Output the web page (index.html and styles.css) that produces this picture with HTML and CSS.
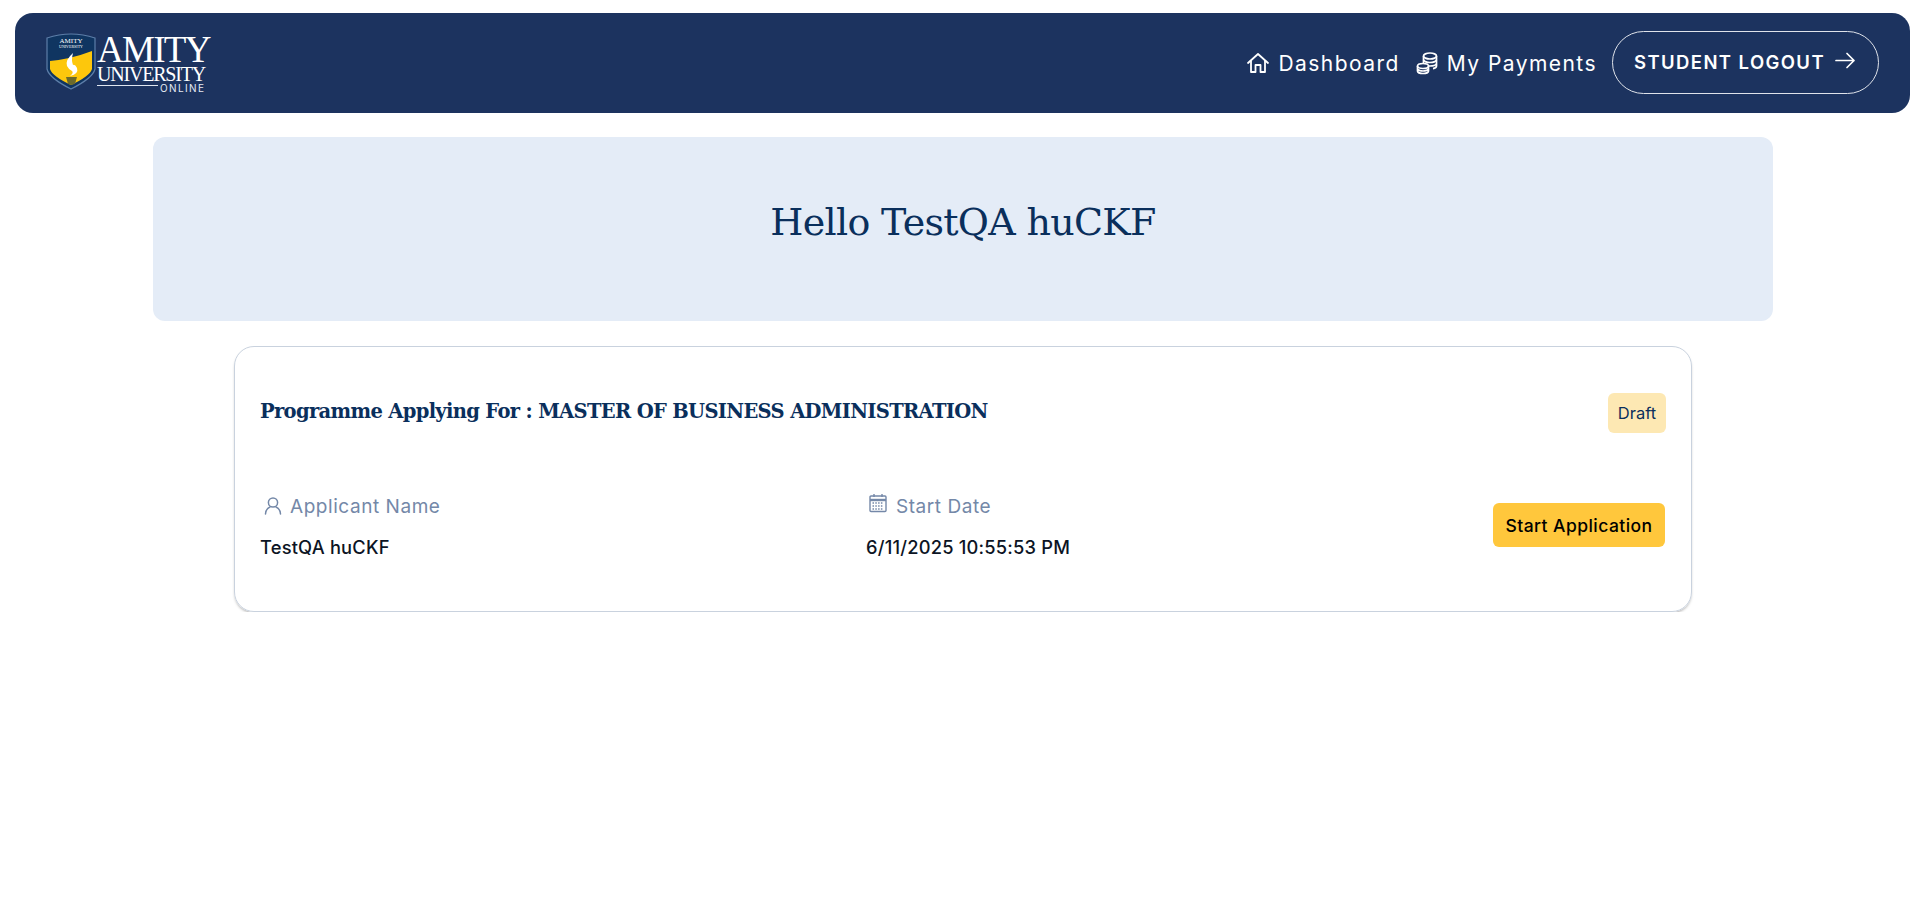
FILE: index.html
```html
<!DOCTYPE html>
<html>

<head>
    <title>Student Dashboard</title>
    <link rel="stylesheet" href="styles.css">
</head>

<body>
    <nav class="navbar">
        <div class="logo">
            <svg class="logo-shield" width="50" height="58" viewBox="0 0 50 58">
                <path d="M1 6 Q25 -2 49 6 L49 37 Q47 46 25 57 Q3 46 1 37 Z" fill="#0f3561" stroke="#5d7ea8" stroke-width="1.2" />
                <path d="M4 29 Q25 27 46 19 L46 37 Q44 44 25 53 Q6 44 4 37 Z" fill="#fdc70c" />
                <path d="M27 21 Q19 28 21 34 Q23 38 26 39 Q28 41 24 44 Q33 42 31 36 Q29 32 27 33 Q25 28 27 21 Z" fill="#fff" />
                <path d="M20 45 H31 L29 52 L25 53 L22 52 Z" fill="#6b6a2c" />
                <text x="25" y="11" class="shield-text">AMITY</text>
                <text x="25" y="16" class="shield-small">UNIVERSITY</text>
            </svg>
            <div class="logo-words">
                <span class="logo-amity">AMITY</span>
                <span class="logo-uni">UNIVERSITY</span>
                <div class="logo-bottom">
                    <span class="logo-line"></span>
                    <span class="logo-online">ONLINE</span>
                </div>
            </div>
        </div>
        <div class="nav-links">
            <a class="nav-link">
                <svg width="24" height="24" viewBox="0 0 24 24" fill="none" stroke="#fff" stroke-width="1.8" stroke-linejoin="round" stroke-linecap="round">
                    <path d="M2 12 L12 3 L22 12" />
                    <path d="M5 10 V21 H9.5 V14 H14.5 V21 H19 V10" />
                </svg>
                Dashboard
            </a>
            <a class="nav-link">
                <svg width="24" height="24" viewBox="0 0 24 24" fill="none" stroke="#fff" stroke-width="1.7">
                    <ellipse cx="15" cy="5" rx="6.5" ry="3" />
                    <path d="M8.5 5 V17 M21.5 5 V15 Q21.5 17 18 17.6" />
                    <path d="M8.5 9 Q10 11.5 15 11.5 T21.5 9 M8.5 13 Q10 15 15 15 T21.5 13" />
                    <ellipse cx="8" cy="15" rx="5.5" ry="2.5" fill="#1c335f" />
                    <path d="M2.5 15 V20 Q3 22.5 8 22.5 T13.5 20 V15 M2.5 18 Q4 20 8 20 T13.5 18" />
                </svg>
                My Payments
            </a>
            <a class="logout-btn">
                STUDENT LOGOUT
                <svg width="24" height="24" viewBox="0 0 24 24" fill="none" stroke="#fff" stroke-width="1.7" stroke-linecap="round" stroke-linejoin="round">
                    <path d="M3 10.5 H21 M14 3.5 L21 10.5 L14 17.5" />
                </svg>
            </a>
        </div>
    </nav>

    <div class="banner">
        <h1>Hello TestQA huCKF</h1>
    </div>

    <div class="card">
        <div class="card-top">
            <h2>Programme Applying For : MASTER OF BUSINESS ADMINISTRATION</h2>
            <span class="badge">Draft</span>
        </div>
        <div class="card-bottom">
            <div class="info info-name">
                <div class="info-label">
                    <svg width="20" height="20" viewBox="0 0 20 20" fill="none" stroke="#7488a8" stroke-width="1.5" stroke-linecap="round">
                        <circle cx="10" cy="6.5" r="4.6" />
                        <path d="M2.5 18 Q3 12.5 7 11 M17.5 18 Q17 12.5 13 11" />
                    </svg>
                    Applicant Name
                </div>
                <div class="info-value">TestQA huCKF</div>
            </div>
            <div class="info info-date">
                <div class="info-label">
                    <svg width="18" height="20" viewBox="0 0 18 20" fill="none" stroke="#7488a8" stroke-width="1.4">
                        <rect x="1" y="3" width="16" height="15.5" rx="1" />
                        <path d="M1 7 H17" stroke-width="2.4" />
                        <path d="M5 1 V4 M13 1 V4" />
                        <path d="M3.5 10 H14.5 M3.5 13 H14.5 M3.5 16 H14.5" stroke-dasharray="1.5 1.3" />
                    </svg>
                    Start Date
                </div>
                <div class="info-value">6/11/2025 10:55:53 PM</div>
            </div>
            <button class="start-btn">Start Application</button>
        </div>
    </div>
</body>

</html>
```

FILE: styles.css
```css
body {
    margin: 0;
    font-family: "Inter", "Open Sans", sans-serif;
    background-color: #fff;
}

.navbar {
    display: flex;
    align-items: center;
    justify-content: space-between;
    height: 100px;
    margin: 13px 15px 0;
    padding: 0 31px;
    background-color: #1c335f;
    border-radius: 18px;
}

.logo {
    display: flex;
    align-items: center;
    gap: 1px;
    margin-top: -4px;
}

.shield-text {
    font-family: "Liberation Serif", serif;
    font-size: 7px;
    fill: #fff;
    text-anchor: middle;
}

.shield-small {
    font-family: "Liberation Serif", serif;
    font-size: 4px;
    fill: #fff;
    text-anchor: middle;
}

.logo-words {
    display: flex;
    flex-direction: column;
    width: 114px;
    color: #fff;
    font-family: "Liberation Serif", serif;
    margin-top: 4px;
}

.logo-amity {
    font-size: 37px;
    line-height: 33px;
    letter-spacing: -1.7px;
}

.logo-uni {
    font-size: 20px;
    line-height: 17px;
    letter-spacing: -1.2px;
}

.logo-bottom {
    display: flex;
    align-items: flex-start;
    gap: 2px;
}

.logo-line {
    width: 61px;
    height: 1px;
    margin-top: 2px;
    background-color: #dfe6f0;
}

.logo-online {
    font-family: "Inter", sans-serif;
    font-size: 10px;
    line-height: 11px;
    letter-spacing: 1.4px;
    color: #e6ebf3;
}

.nav-links {
    display: flex;
    align-items: center;
}

.nav-link {
    display: flex;
    align-items: center;
    gap: 8px;
    margin-right: 15px;
    color: #fff;
    font-size: 21px;
    letter-spacing: 1.45px;
}

.logout-btn {
    display: flex;
    align-items: center;
    justify-content: center;
    gap: 8px;
    box-sizing: border-box;
    width: 267px;
    height: 63px;
    margin-top: -2px;
    color: #fff;
    font-size: 18.5px;
    font-weight: 600;
    letter-spacing: 1.4px;
    border: 1px solid #dfe3ea;
    border-radius: 32px;
}

.banner {
    display: flex;
    align-items: center;
    justify-content: center;
    box-sizing: border-box;
    width: 1620px;
    height: 184px;
    margin: 24px 0 0 153px;
    padding-bottom: 14px;
    background-color: #e4ecf7;
    border-radius: 12px;
}

h1 {
    margin: 0;
    color: #0a2f5c;
    font-family: "DejaVu Serif", serif;
    font-size: 38px;
    font-weight: 400;
    letter-spacing: -0.7px;
}

.card {
    box-sizing: border-box;
    width: 1458px;
    height: 266px;
    margin: 25px 0 0 234px;
    padding: 46px 25px 0;
    border: 1px solid #c9d2de;
    border-radius: 20px;
    box-shadow: 0 2px 3px -1px rgba(0, 0, 0, 0.35);
}

.card-top {
    display: flex;
    justify-content: space-between;
    align-items: flex-start;
}

h2 {
    margin: 3px 0 0;
    color: #0a2f5c;
    font-family: "DejaVu Serif", serif;
    font-size: 19.5px;
    font-weight: 700;
    line-height: 32px;
    letter-spacing: -0.67px;
}

.badge {
    display: flex;
    align-items: center;
    justify-content: center;
    width: 58px;
    height: 40px;
    color: #0a2f5c;
    font-size: 16.5px;
    background-color: #fde8b3;
    border-radius: 6px;
}

.card-bottom {
    display: flex;
    align-items: center;
    margin-top: 60px;
}

.info-name {
    width: 606px;
}

.info-date {
    flex: 1;
}

.info-label {
    display: flex;
    align-items: center;
    gap: 7px;
    height: 28px;
    margin-top: -1px;
    color: #7488a8;
    font-size: 19px;
    letter-spacing: 0.55px;
}

.info-name .info-label svg {
    margin-left: 3px;
}

.info-date .info-label svg {
    margin-top: -6px;
    margin-left: 3px;
    margin-right: 2px;
}

.info-value {
    margin-top: 14px;
    color: #0c1424;
    font-size: 18.3px;
    font-weight: 500;
    line-height: 27px;
    letter-spacing: 0.2px;
}

.start-btn {
    width: 172px;
    height: 44px;
    margin-right: 1px;
    margin-top: -4px;
    color: #000;
    font-family: "Inter", sans-serif;
    font-size: 17.5px;
    font-weight: 500;
    letter-spacing: 0.45px;
    background-color: #ffc73c;
    border: none;
    border-radius: 6px;
}
```
